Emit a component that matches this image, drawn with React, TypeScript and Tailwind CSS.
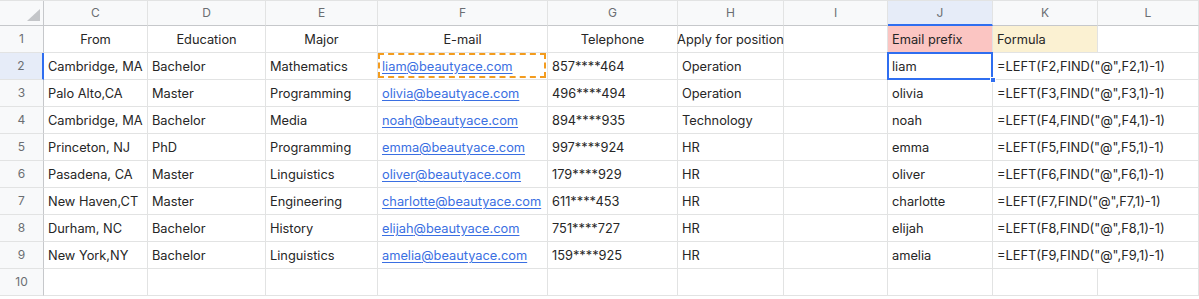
const cols = ["C", "D", "E", "F", "G", "H", "I", "J", "K", "L"];
const widths = ["w-[104px]", "w-[118px]", "w-[112px]", "w-[170px]", "w-[130px]", "w-[106px]", "w-[104px]", "w-[105px]", "w-[105px]", "flex-1"];

const rows = [
  ["Cambridge, MA", "Bachelor", "Mathematics", "liam", "857****464", "Operation"],
  ["Palo Alto,CA", "Master", "Programming", "olivia", "496****494", "Operation"],
  ["Cambridge, MA", "Bachelor", "Media", "noah", "894****935", "Technology"],
  ["Princeton, NJ", "PhD", "Programming", "emma", "997****924", "HR"],
  ["Pasadena, CA", "Master", "Linguistics", "oliver", "179****929", "HR"],
  ["New Haven,CT", "Master", "Engineering", "charlotte", "611****453", "HR"],
  ["Durham, NC", "Bachelor", "History", "elijah", "751****727", "HR"],
  ["New York,NY", "Bachelor", "Linguistics", "amelia", "159****925", "HR"],
];

const headers = ["From", "Education", "Major", "E-mail", "Telephone", "Apply for position"];

const cell = "relative h-[27px] shrink-0 border-r border-b border-[#e2e3e3] px-[4px] pt-[1px] flex items-center whitespace-nowrap";

function RowHead({ n, active }: { n: number; active?: boolean }) {
  return (
    <div
      className={
        "h-[27px] w-[44px] shrink-0 flex items-center justify-center text-[12px] text-[#6b6e72] border-b border-[#e2e3e3] " +
        (active ? "bg-[#e6ecf8] border-r-2 border-r-[#2f6ef0]" : "bg-[#f8f9fa] border-r border-r-[#c6c8cb]")
      }
    >
      {n}
    </div>
  );
}

export default function App() {
  return (
    <div className="w-[1199px] h-[299px] overflow-hidden bg-white text-[12.8px] text-[#262626]" style={{ fontFamily: "Inter, 'Noto Sans', sans-serif" }}>
      {/* column letters */}
      <div className="flex h-[26px] bg-[#f8f9fa] border-t border-[#e2e3e3]">
        <div className="relative w-[44px] shrink-0 border-r border-b border-[#c6c8cb]">
          <svg className="absolute right-[3px] bottom-[4px]" width="13" height="12" viewBox="0 0 13 12">
            <polygon points="13,0 13,12 0,12" fill="#c4c6c9" />
          </svg>
        </div>
        {cols.map((c, i) => (
          <div
            key={c}
            className={
              widths[i] +
              " shrink-0 flex items-center justify-center text-[12px] text-[#6b6e72] border-r border-r-[#e2e3e3] " +
              (c === "J" ? "bg-[#e6ecf8] border-b-2 border-b-[#2f6ef0]" : "border-b border-b-[#c6c8cb]")
            }
          >
            {c}
          </div>
        ))}
      </div>

      {/* row 1 */}
      <div className="flex">
        <RowHead n={1} />
        {headers.map((h, i) => (
          <div key={h} className={cell + " " + widths[i] + " justify-center"}>
            {h}
          </div>
        ))}
        <div className={cell + " " + widths[6]} />
        <div className={cell + " " + widths[7] + " bg-[#fbc5c2]"}>Email prefix</div>
        <div className={cell + " " + widths[8] + " bg-[#fbf1d2]"}>Formula</div>
        <div className={cell + " flex-1"} />
      </div>

      {rows.map((r, idx) => {
        const n = idx + 2;
        const first = n === 2;
        return (
          <div key={n} className="flex">
            <RowHead n={n} active={first} />
            <div className={cell + " " + widths[0]}>{r[0]}</div>
            <div className={cell + " " + widths[1]}>{r[1]}</div>
            <div className={cell + " " + widths[2]}>{r[2]}</div>
            <div className={cell + " " + widths[3]}>
              <span className="text-[#3a6fe2] underline underline-offset-[2px]">{r[3]}@beautyace.com</span>
              {first && <div className="absolute left-0 top-0 right-[1px] bottom-[1px] border-2 border-dashed border-[#f39c1f]" />}
            </div>
            <div className={cell + " " + widths[4]}>{r[4]}</div>
            <div className={cell + " " + widths[5]}>{r[5]}</div>
            <div className={cell + " " + widths[6]} />
            <div className={cell + " " + widths[7]}>
              {r[3]}
              {first && (
                <>
                  <div className="absolute left-[-1px] top-[-1px] right-[-1px] bottom-[-1px] border-2 border-[#2f6ef0]" />
                  <div className="absolute right-[-4px] bottom-[-4px] w-[6px] h-[6px] bg-[#2f6ef0] border border-white z-10" />
                </>
              )}
            </div>
            <div className={cell + " " + widths[8] + " border-r-0 overflow-visible z-[1]"}>
              ={"LEFT(F" + n + ',FIND("@",F' + n + ",1)-1)"}
            </div>
            <div className={cell + " flex-1"} />
          </div>
        );
      })}

      {/* row 10 */}
      <div className="flex">
        <RowHead n={10} />
        {widths.map((w, i) => (
          <div key={i} className={cell + " " + w} />
        ))}
      </div>
    </div>
  );
}
